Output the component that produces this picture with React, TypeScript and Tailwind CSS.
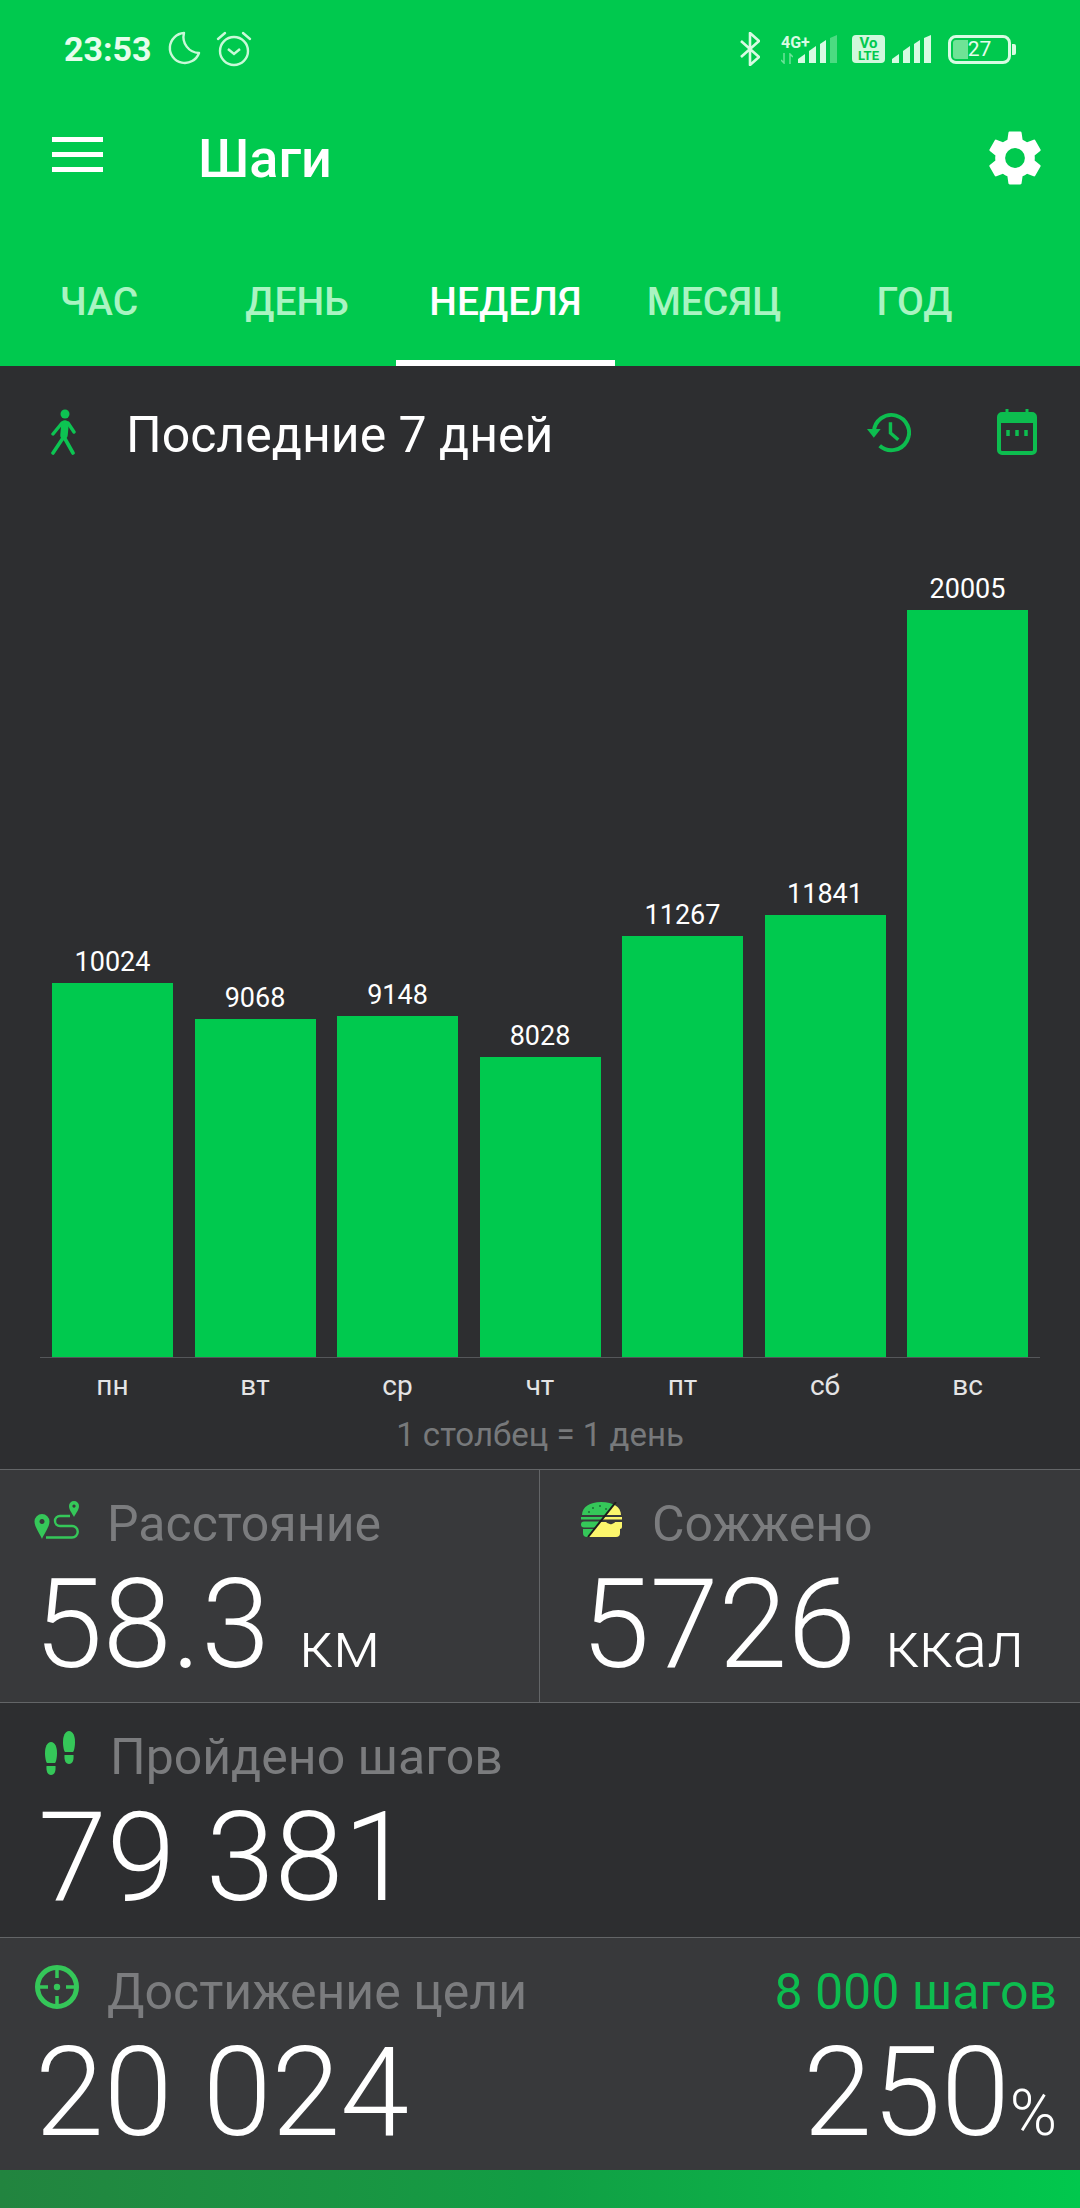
import { type FC } from "react"

const bars = [
    { label: "пн", value: 10024, height: 374 },
    { label: "вт", value: 9068, height: 338 },
    { label: "ср", value: 9148, height: 341 },
    { label: "чт", value: 8028, height: 300 },
    { label: "пт", value: 11267, height: 421 },
    { label: "сб", value: 11841, height: 442 },
    { label: "вс", value: 20005, height: 747 },
]

const tabs = [
    { title: "ЧАС", width: "w-[198px] text-[#a9f4c2]" },
    { title: "ДЕНЬ", width: "w-[198px] text-[#a9f4c2]" },
    { title: "НЕДЕЛЯ", width: "w-[219px] border-b-[6px] border-white text-white" },
    { title: "МЕСЯЦ", width: "w-[198px] text-[#a9f4c2]" },
    { title: "ГОД", width: "w-[203px] text-[#a9f4c2]" },
]

const Signal: FC<{ dim?: boolean }> = ({ dim }) => (
    <svg width="40" height="28" viewBox="0 0 40 28" fill="#d8fbe3">
        <path d="M0 28 V24 L7 19 V28 Z" />
        <path d="M11 16 L18 11 V28 H11 Z" />
        <path d="M22 9 L28 5 V28 H22 Z" />
        <path d="M32 3 L39 0 V28 H32 Z" opacity={dim ? 0.35 : 1} />
    </svg>
)

const StatusIcons: FC = () => (
    <div className="flex items-center font-['Roboto',sans-serif]">
        <svg width="20" height="34" viewBox="0 0 20 34" fill="none" stroke="#d8fbe3" strokeWidth="2.6" strokeLinejoin="round">
            <path d="M1 9 L19 25 L10 33 V1 L19 9 L1 25" />
        </svg>
        <div className="ml-[21px] flex w-[17px] flex-col">
            <span className="text-[16px] font-bold leading-[15px] whitespace-nowrap text-[#d8fbe3]">4G+</span>
            <svg className="mt-[3px]" width="12" height="11" viewBox="0 0 12 11" fill="none" stroke="#d8fbe3" strokeWidth="1.5" opacity="0.5">
                <path d="M3 0 V10 L0 7 M9 11 V1 L12 4" />
            </svg>
        </div>
        <Signal dim />
        <div className="ml-[14px] flex h-[28px] w-[33px] flex-col items-center justify-center rounded-[4px] bg-[#d0f8dc] text-[#00c94e]">
            <span className="text-[15px] font-bold leading-[13px]">Vo</span>
            <span className="text-[13px] font-bold leading-[12px]">LTE</span>
        </div>
        <div className="ml-[7px]">
            <Signal />
        </div>
        <div className="ml-[16px] flex items-center">
            <div className="flex h-[29px] w-[63px] items-center justify-center rounded-[8px] border-[3px] border-[#d8fbe3] bg-[linear-gradient(to_right,#6fe396_0,#6fe396_30%,transparent_30%)] bg-clip-content p-[2px]">
                <span className="text-[21px] leading-[20px] text-[#e6fdec]">27</span>
            </div>
            <div className="ml-[1px] h-[11px] w-[4px] rounded-r-[2px] bg-[#d8fbe3]" />
        </div>
    </div>
)

const Gear: FC = () => (
    <svg width="66" height="66" viewBox="0 0 24 24" fill="#fff">
        <path d="M19.14 12.94c.04-.3.06-.61.06-.94 0-.32-.02-.64-.07-.94l2.03-1.58a.49.49 0 0 0 .12-.61l-1.92-3.32a.49.49 0 0 0-.59-.22l-2.39.96c-.5-.38-1.03-.7-1.62-.94l-.36-2.54a.48.48 0 0 0-.48-.41h-3.84c-.24 0-.43.17-.47.41l-.36 2.54c-.59.24-1.13.57-1.62.94l-2.39-.96a.48.48 0 0 0-.59.22L2.74 8.87c-.12.21-.08.47.12.61l2.03 1.58c-.05.3-.09.63-.09.94s.02.64.07.94l-2.03 1.58a.49.49 0 0 0-.12.61l1.92 3.32c.12.22.37.29.59.22l2.39-.96c.5.38 1.03.7 1.62.94l.36 2.54c.05.24.24.41.48.41h3.84c.24 0 .44-.17.47-.41l.36-2.54c.59-.24 1.13-.56 1.62-.94l2.39.96c.22.08.47 0 .59-.22l1.92-3.32c.12-.22.07-.47-.12-.61l-2.01-1.58zM12 15.6A3.6 3.6 0 1 1 12 8.4a3.6 3.6 0 0 1 0 7.2z" />
    </svg>
)

const WalkIcon: FC = () => (
    <svg className="mb-[6px] shrink-0" width="26" height="46" viewBox="0 0 26 46" fill="none" stroke="#0dc452" strokeLinecap="round" strokeLinejoin="round">
        <circle cx="15" cy="5" r="4.5" fill="#0dc452" stroke="none" />
        <path d="M15 15 L14 26" strokeWidth="7.5" />
        <path d="M12 14 L3 25 M18 14 L24 23" strokeWidth="3.4" />
        <path d="M13 29 L3 44 M14 28 L23 44" strokeWidth="3.6" />
    </svg>
)

const RouteIcon: FC = () => (
    <svg className="mb-[8px] shrink-0" width="46" height="38" viewBox="0 0 46 38">
        <path fillRule="evenodd" fill="#35c759" d="M8 13 a7.5 7.5 0 0 1 7.5 7.5 C15.5 26 10 33 8 38 C6 33 .5 26 .5 20.5 A7.5 7.5 0 0 1 8 13 Z M8 18 a2.5 2.5 0 1 0 .01 0 Z" />
        <path fillRule="evenodd" fill="#35c759" d="M40 0 a5 5 0 0 1 5 5 C45 9 42 12 40 16 C38 12 35 9 35 5 A5 5 0 0 1 40 0 Z M40 3.5 a1.6 1.6 0 1 0 .01 0 Z" />
        <path d="M36 15 H26 a5 5 0 0 0 0 10 H38 a5.5 5.5 0 0 1 0 11.5 H12" fill="none" stroke="#35c759" strokeWidth="2.4" />
    </svg>
)

const BurgerIcon: FC = () => (
    <svg className="mb-[9px] shrink-0" width="41" height="35" viewBox="0 0 41 35">
        <defs>
            <clipPath id="burger-left">
                <path d="M0 0 H35 L7 35 H0 Z" />
            </clipPath>
            <clipPath id="burger-right">
                <path d="M35 0 H41 V35 H7 Z" />
            </clipPath>
        </defs>
        <g clipPath="url(#burger-left)" fill="#35c759">
            <path d="M1 13 C1 5 9 0 20 0 C32 0 40 5 40 13 Z" />
            <rect x="0" y="15" width="41" height="2.5" />
            <rect x="0" y="19.5" width="41" height="6" rx="3" />
            <path d="M2 27 H39 V31 a4 4 0 0 1 -4 4 H6 a4 4 0 0 1 -4 -4 Z" />
        </g>
        <g clipPath="url(#burger-right)" fill="#fbf66c">
            <path d="M1 13 C1 5 9 0 20 0 C32 0 40 5 40 13 Z" />
            <rect x="0" y="15" width="41" height="2.5" />
            <path d="M0 20 H41 V25 a2 2 0 0 1 -2 2 H2 Z" />
            <path d="M2 25 H39 V31 a4 4 0 0 1 -4 4 H6 a4 4 0 0 1 -4 -4 Z" />
        </g>
        <path d="M24 19 q3 4 7 3 q3 -1 4 -3 l-1 -1 H25 Z" fill="#38393b" />
        <path d="M35 0 L7 35" stroke="#1c1c1c" strokeWidth="2" />
        <g fill="#1c6e38">
            <circle cx="12" cy="6" r="1" />
            <circle cx="19" cy="4" r="1" />
            <circle cx="25" cy="7" r="1" />
            <circle cx="8" cy="10" r="1" />
        </g>
    </svg>
)

const StepsIcon: FC = () => (
    <svg className="mb-[8px] shrink-0" width="30" height="44" viewBox="0 0 30 44" fill="#35c759">
        <path d="M6 11 C10 11 12 16 12 22 C12 27 11 31 10 32 H2 C1 31 0 27 0 22 C0 16 2 11 6 11 Z" />
        <path d="M1.5 35 H10.5 C11 40 9.5 44 6 44 C2.5 44 1 40 1.5 35 Z" />
        <path d="M24 0 C28 0 30 5 30 11 C30 16 29 20 28 21 H20 C19 20 18 16 18 11 C18 5 20 0 24 0 Z" />
        <path d="M19.5 24 H28.5 C29 29 27.5 33 24 33 C20.5 33 19 29 19.5 24 Z" />
    </svg>
)

const TargetIcon: FC = () => (
    <svg className="mb-[10px] shrink-0" width="44" height="44" viewBox="0 0 44 44" fill="none" stroke="#35c759" strokeWidth="5">
        <circle cx="22" cy="22" r="19.5" />
        <path d="M22 2 V13 M22 31 V42 M2 22 H13 M31 22 H42" strokeWidth="3.5" />
        <circle cx="22" cy="22" r="3.2" fill="#35c759" stroke="none" />
    </svg>
)

const App: FC = () => {
    return (
        <div className="flex h-[2208px] w-[1080px] flex-col overflow-hidden bg-[#2d2e30] font-['Roboto',sans-serif]">
            <div className="h-[366px] shrink-0 bg-[#00c94e]">
                <div className="flex h-[98px] items-center justify-between pl-[64px] pr-[64px]">
                    <div className="flex items-center">
                        <span className="text-[34px] font-bold text-[#e6fdec]">23:53</span>
                        <svg className="ml-[16px]" width="34" height="36" viewBox="0 0 34 36" fill="none" stroke="#c9f9d8" strokeWidth="2.4">
                            <path d="M16 2 A15 15 0 1 0 31 22 A16 16 0 0 1 16 2 Z" strokeLinejoin="round" />
                        </svg>
                        <svg className="ml-[14px]" width="36" height="36" viewBox="0 0 36 36" fill="none" stroke="#c9f9d8" strokeWidth="2.4">
                            <circle cx="18" cy="20" r="14" />
                            <path d="M12 18 L18 23 L24 18" />
                            <path d="M2 8 L9 2 M34 8 L27 2" strokeLinecap="round" />
                        </svg>
                    </div>
                    <StatusIcons />
                </div>
                <div className="flex h-[120px] items-center justify-between pl-[52px] pr-[32px]">
                    <div className="flex items-center">
                        <div className="mb-[8px] flex w-[51px] flex-col gap-[10px]">
                            <div className="h-[5px] bg-white" />
                            <div className="h-[5px] bg-white" />
                            <div className="h-[5px] bg-white" />
                        </div>
                        <span className="ml-[95px] text-[54px] font-medium text-white">Шаги</span>
                    </div>
                    <Gear />
                </div>
                <div className="mt-[22px] flex h-[126px] items-start">
                    {tabs.map((t) => (
                        <div
                            key={t.title}
                            className={`flex h-[126px] items-start justify-center pt-[33px] text-[39px] font-medium ${t.width}`}
                        >
                            {t.title}
                        </div>
                    ))}
                </div>
            </div>

            <div className="flex h-[138px] shrink-0 items-center justify-between pl-[50px] pr-[43px]">
                <div className="flex items-center">
                    <WalkIcon />
                    <span className="ml-[50px] text-[50px] text-white">Последние 7 дней</span>
                </div>
                <div className="mb-[7px] flex items-center gap-[86px]">
                    <svg width="45" height="42" viewBox="0 0 46 42" fill="none" stroke="#0dbd4f" strokeWidth="4">
                        <path d="M8 21 A18 18 0 1 1 14 35" />
                        <path d="M1 18 L15 18 L8 27 Z" fill="#0dbd4f" stroke="none" />
                        <path d="M25 11 V22 L33 29" strokeWidth="3.5" />
                    </svg>
                    <svg width="40" height="46" viewBox="0 0 40 46">
                        <rect x="2" y="5" width="36" height="39" rx="3" fill="none" stroke="#0dbd4f" strokeWidth="4" />
                        <rect x="2" y="5" width="36" height="9" fill="#0dbd4f" />
                        <path d="M10 0 V6 M30 0 V6" stroke="#0dbd4f" strokeWidth="3" />
                        <path d="M11 21 V27 M20 21 V27 M29 21 V27" stroke="#0dbd4f" strokeWidth="3.5" />
                    </svg>
                </div>
            </div>

            <div className="flex h-[965px] shrink-0 flex-col px-[40px]">
                <div className="flex h-[854px] shrink-0 items-end gap-[21.5px] border-b border-[#55575a] px-[12px]">
                    {bars.map((b) => (
                        <div key={b.label} className="flex w-[121px] flex-col items-center">
                            <span className="mb-[2px] text-[27px] leading-[38px] text-white">{b.value}</span>
                            <div className="w-full bg-[#00c94e]" style={{ height: b.height }} />
                        </div>
                    ))}
                </div>
                <div className="mt-[8px] flex gap-[21.5px] px-[12px]">
                    {bars.map((b) => (
                        <span key={b.label} className="w-[121px] text-center text-[28px] leading-[40px] text-[#e4e4e5]">
                            {b.label}
                        </span>
                    ))}
                </div>
                <div className="mt-[7px] text-center text-[33px] leading-[44px] text-[#77797b]">1 столбец = 1 день</div>
            </div>

            <div className="flex h-[233px] shrink-0 border-t border-[#636567] bg-[#38393b]">
                <div className="w-[540px] border-r border-[#636567] pl-[34px]">
                    <div className="mt-[24px] flex h-[60px] items-center">
                        <RouteIcon />
                        <span className="ml-[27px] text-[50px] leading-[60px] text-[#7b7c7e]">Расстояние</span>
                    </div>
                    <div className="mt-[6px] flex items-baseline text-white">
                        <span className="text-[124px] font-light leading-[130px]">58.3</span>
                        <span className="ml-[29px] text-[65px] font-light">км</span>
                    </div>
                </div>
                <div className="flex-1 pl-[41px]">
                    <div className="mt-[24px] flex h-[60px] items-center">
                        <BurgerIcon />
                        <span className="ml-[30px] text-[50px] leading-[60px] text-[#7b7c7e]">Сожжено</span>
                    </div>
                    <div className="mt-[6px] flex items-baseline text-white">
                        <span className="text-[124px] font-light leading-[130px]">5726</span>
                        <span className="ml-[29px] text-[65px] font-light">ккал</span>
                    </div>
                </div>
            </div>

            <div className="h-[235px] shrink-0 border-t border-[#636567] pl-[38px]">
                <div className="mt-[24px] flex h-[60px] items-center">
                    <div className="ml-[7px] flex items-center">
                        <StepsIcon />
                    </div>
                    <span className="ml-[35px] text-[50px] leading-[60px] text-[#7b7c7e]">Пройдено шагов</span>
                </div>
                <div className="mt-[6px] text-[124px] font-light leading-[130px] text-white">79 381</div>
            </div>

            <div className="flex h-[233px] shrink-0 justify-between border-t border-[#636567] bg-[#38393b] pl-[35px] pr-[23px]">
                <div>
                    <div className="mt-[24px] flex h-[60px] items-center">
                        <TargetIcon />
                        <span className="ml-[28px] text-[50px] leading-[60px] text-[#7b7c7e]">Достижение цели</span>
                    </div>
                    <div className="mt-[6px] text-[124px] font-light leading-[130px] text-white">20 024</div>
                </div>
                <div className="flex flex-col items-end">
                    <span className="mt-[24px] text-[50px] leading-[60px] text-[#0dbd4f]">8 000 шагов</span>
                    <div className="mt-[6px] flex items-baseline text-white">
                        <span className="text-[124px] font-light leading-[130px]">250</span>
                        <span className="text-[64px] font-light">%</span>
                    </div>
                </div>
            </div>

            <div className="flex-1 bg-gradient-to-r from-[#22843f] via-[#119e44] to-[#01c84d]" />
        </div>
    )
}

export default App
